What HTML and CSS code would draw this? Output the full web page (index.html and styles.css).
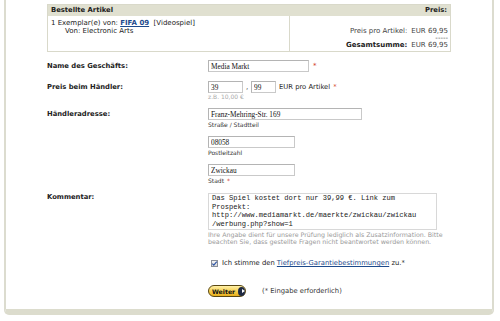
FILE: index.html
```html
<!DOCTYPE html>
<html lang="de">
<head>
    <meta charset="UTF-8">
    <title>Tiefpreis-Garantie</title>
    <link rel="stylesheet" href="styles.css">
</head>
<body>
    <div class="panel">
        <!-- Bestellung -->
        <table class="order">
            <tr>
                <th class="col-item">Bestellte Artikel</th>
                <th class="col-price">Preis:</th>
            </tr>
            <tr>
                <td class="item-cell">
                    <div>1 Exemplar(e) von: <a href="#" class="title">FIFA 09</a>&nbsp; [Videospiel]</div>
                    <div class="maker">Von: Electronic Arts</div>
                </td>
                <td class="price-cell">
                    <div class="sums">
                        <span class="sum-label">Preis pro Artikel:</span>
                        <span class="sum-value">EUR 69,95</span>
                        <span></span>
                        <span class="sum-value">-----</span>
                        <span class="sum-label strong">Gesamtsumme:</span>
                        <span class="sum-value">EUR 69,95</span>
                    </div>
                </td>
            </tr>
        </table>

        <!-- Formular -->
        <form class="report">
            <div class="row row-name">
                <label class="row-label" for="shop">Name des Geschäfts:</label>
                <div class="field inline">
                    <input id="shop" class="text w-name" value="Media Markt">
                    <span class="req">*</span>
                </div>
            </div>

            <div class="row row-price">
                <label class="row-label" for="euro">Preis beim Händler:</label>
                <div class="field">
                    <div class="inline">
                        <input id="euro" class="text w-euro" value="39">
                        <span class="comma">,</span>
                        <input class="text w-cent" value="99">
                        <span class="unit">EUR pro Artikel <span class="req">*</span></span>
                    </div>
                    <div class="example">z.B. 10,00 €</div>
                </div>
            </div>

            <div class="row row-address">
                <label class="row-label" for="street">Händleradresse:</label>
                <div class="field">
                    <div class="group">
                        <input id="street" class="text w-street" value="Franz-Mehring-Str. 169">
                        <div class="caption">Straße / Stadtteil</div>
                    </div>
                    <div class="group">
                        <input class="text w-short" value="08058">
                        <div class="caption">Postleitzahl</div>
                    </div>
                    <div class="group">
                        <input class="text w-short" value="Zwickau">
                        <div class="caption">Stadt <span class="req">*</span></div>
                    </div>
                </div>
            </div>

            <div class="row row-comment">
                <label class="row-label top" for="comment">Kommentar:</label>
                <div class="field">
                    <textarea id="comment" class="comment">Das Spiel kostet dort nur 39,99 €. Link zum
Prospekt:
http://www.mediamarkt.de/maerkte/zwickau/zwickau
/werbung.php?show=1</textarea>
                    <div class="note">Ihre Angabe dient für unsere Prüfung lediglich als Zusatzinformation. Bitte<br>beachten Sie, dass gestellte Fragen nicht beantwortet werden können.</div>
                </div>
            </div>

            <div class="row row-agree">
                <span></span>
                <div class="field agree">
                    <span class="check">
                        <svg width="7" height="7" viewBox="0 0 7 7"><path d="M1.3 3.6 L2.8 5.1 L5.8 1.6" fill="none" stroke="#2f56a6" stroke-width="1.2"/></svg>
                    </span>
                    <span>Ich stimme den <a href="#" class="terms">Tiefpreis-Garantiebestimmungen</a> zu.*</span>
                </div>
            </div>

            <div class="row row-submit">
                <span></span>
                <div class="field inline">
                    <button type="button" class="btn-next">Weiter <span class="arrow"></span></button>
                    <span class="required">(* Eingabe erforderlich)</span>
                </div>
            </div>
        </form>
    </div>
</body>
</html>
```

FILE: styles.css
```css
* {
    margin: 0;
    padding: 0;
    box-sizing: border-box;
}

body {
    font-family: "DejaVu Sans", Verdana, sans-serif;
    font-size: 7px;
    color: #222;
    background: #fff;
}

.panel {
    margin-left: 4px;
    width: 490px;
    border: 2px solid #dcdccf;
    border-top: none;
    border-bottom: 6px solid #dcdccd;
    border-radius: 0 0 5px 5px;
    padding: 4px 0 12px 41px;
}

/* Bestellung */
.order {
    width: 404px;
    border-collapse: collapse;
    border: 1px solid #d9d9ca;
}

.order th {
    background: #e0e0d0;
    height: 11px;
    padding: 0 3px;
    font-size: 6.8px;
    line-height: 10px;
    text-align: left;
    color: #222;
}

.order th.col-price {
    text-align: right;
}

.item-cell {
    width: 242px;
    height: 36px;
    border-right: 1px solid #d9d9ca;
    vertical-align: top;
    padding: 3px 3px;
    line-height: 8px;
}

.title {
    color: #1d4a8c;
    font-weight: bold;
}

.maker {
    padding-left: 14px;
}

.price-cell {
    vertical-align: top;
    padding: 12px 2px 0 0;
}

.sums {
    display: grid;
    grid-template-columns: auto auto;
    justify-content: end;
    column-gap: 4px;
    line-height: 7px;
}

.sum-label {
    text-align: right;
    color: #444;
}

.sum-label.strong {
    font-weight: bold;
    color: #222;
}

.sum-value {
    text-align: right;
    color: #444;
}

/* Formular */
.report {
    margin-top: 8px;
}

.row {
    display: grid;
    grid-template-columns: 161px 1fr;
}

.row-label {
    font-weight: bold;
    font-size: 6.8px;
    line-height: 12px;
    color: #222;
}

.row-label.top {
    line-height: 8px;
}

.row-name {
    margin-bottom: 9px;
}

.row-price {
    margin-bottom: 7px;
}

.row-address {
    margin-bottom: 8px;
}

.field {
    display: flex;
    flex-direction: column;
    align-items: flex-start;
}

.field.inline,
.inline {
    flex-direction: row;
    display: flex;
    align-items: center;
}

.text {
    height: 12px;
    border: 1px solid #c9c9c9;
    border-top-color: #b4b4b4;
    border-left-color: #b4b4b4;
    padding: 0 2px;
    font-family: "Liberation Serif", "Times New Roman", serif;
    font-size: 7.3px;
    color: #111;
    background: #fff;
}

.w-name { width: 101px; }
.w-euro { width: 35px; }
.w-cent { width: 25px; }
.w-street { width: 154px; }
.w-short { width: 87px; }

.req {
    color: #d03a24;
    margin-left: 4px;
}

.unit .req,
.caption .req {
    margin-left: 1px;
}

.comma {
    width: 8px;
    text-align: center;
}

.unit {
    margin-left: 3px;
    font-size: 6.8px;
}

.example {
    font-size: 6px;
    line-height: 8px;
    color: #aaa;
}

.group + .group {
    margin-top: 7px;
}

.caption {
    font-size: 6px;
    line-height: 8px;
    margin-top: 1px;
    color: #333;
}

.comment {
    width: 229px;
    height: 37px;
    border: 1px solid #d8d8d8;
    padding: 0 3px;
    font-family: "Liberation Mono", "Courier New", monospace;
    font-size: 7.1px;
    line-height: 8.7px;
    color: #222;
    resize: none;
    overflow: hidden;
    white-space: pre;
}

.note {
    margin-top: 1px;
    font-size: 6.3px;
    line-height: 7px;
    color: #999;
}

.row-agree {
    margin-top: 14px;
}

.agree {
    flex-direction: row;
    align-items: center;
    padding-left: 3px;
    line-height: 9px;
    font-size: 6.8px;
    color: #222;
}

.check {
    width: 7px;
    height: 7px;
    border: 1px solid #8a8f99;
    background: linear-gradient(#f4f4f4, #dcdcdc);
    margin-right: 4px;
    display: flex;
}

.check svg {
    margin: -1px;
}

.terms {
    color: #1d4a8c;
}

.row-submit {
    margin-top: 17px;
}

.btn-next {
    width: 38px;
    height: 12px;
    border: 1px solid #5a4812;
    border-radius: 6px;
    background: linear-gradient(#fff1a8, #f6cd4a 55%, #e8ae1c);
    font-family: "DejaVu Sans", Verdana, sans-serif;
    font-size: 6.2px;
    font-weight: bold;
    color: #111;
    display: flex;
    align-items: center;
    padding-left: 3px;
    gap: 3px;
}

.arrow {
    width: 9px;
    height: 9px;
    border-radius: 50%;
    background: #1f2a44;
    position: relative;
}

.arrow::after {
    content: "";
    position: absolute;
    left: 3.5px;
    top: 2.5px;
    border-left: 3px solid #fff;
    border-top: 2px solid transparent;
    border-bottom: 2px solid transparent;
}

.required {
    margin-left: 16px;
    font-size: 6.8px;
    color: #333;
}
```
